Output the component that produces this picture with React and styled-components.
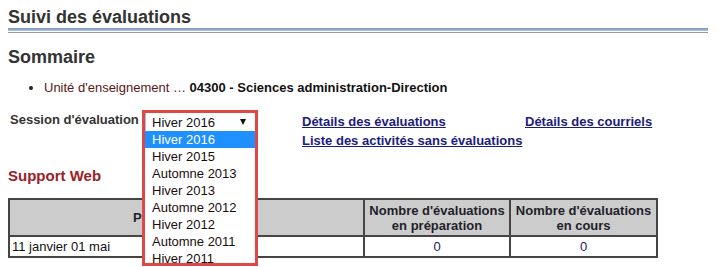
import React from "react";
import styled, { createGlobalStyle } from "styled-components";

const GlobalStyle = createGlobalStyle`
  body {
    margin: 0;
    background: #ffffff;
    font-family: "Liberation Sans", Arial, sans-serif;
    color: #222;
  }
`;

const Page = styled.div`
  min-height: 100vh;
  box-sizing: border-box;
  padding: 6px 8px 0 8px;
`;

const Title = styled.h1`
  margin: 0;
  font-size: 18px;
  line-height: 22px;
  font-weight: bold;
  color: #333;
`;

const Rule = styled.div`
  height: 5px;
  width: 700px;
  background: linear-gradient(
    to bottom,
    #7491b9 0,
    #b3c7df 3px,
    #ffffff 3px,
    #ffffff 4px,
    #9b9b9b 4px,
    #9b9b9b 5px
  );
`;

const SectionTitle = styled.h2`
  margin: 13px 0 0 0;
  font-size: 18px;
  line-height: 22px;
  font-weight: bold;
  color: #333;
`;

const List = styled.ul`
  margin: 12px 0 0 0;
  padding-left: 36px;
  font-size: 13px;
  line-height: 16px;
`;

const Label = styled.span`
  color: #5a1616;
`;

const Strong = styled.b`
  color: #111;
`;

const SessionRow = styled.div`
  display: grid;
  grid-template-columns: 134px 160px 223px auto;
  margin-top: 14px;
  align-items: start;
`;

const SessionLabel = styled.div`
  padding: 2px 0 0 2px;
  font-size: 13px;
  line-height: 16px;
  font-weight: bold;
  color: #333;
`;

const DropWrap = styled.div`
  position: relative;
  width: 116px;
`;

const SelectBox = styled.div`
  display: flex;
  align-items: center;
  justify-content: space-between;
  height: 18px;
  padding: 0 9px 0 7px;
  border: 3px solid #e04747;
  border-bottom: none;
  box-shadow: inset 1px 0 0 #a9bfdc;
  font-size: 13px;
  color: #111;
  background: #fff;
`;

const Arrow = styled.span`
  width: 0;
  height: 0;
  border-left: 3px solid transparent;
  border-right: 3px solid transparent;
  border-top: 6px solid #111;
`;

const Options = styled.div`
  position: absolute;
  top: 100%;
  left: 0;
  width: 116px;
  height: 135px;
  box-sizing: border-box;
  overflow: hidden;
  border: 3px solid #e04747;
  border-top: none;
  background: #fff;
  z-index: 2;
`;

const Option = styled.div`
  height: 17px;
  line-height: 17px;
  padding-left: 7px;
  font-size: 13px;
  color: ${(props) => (props.selected ? "#ffffff" : "#1a0d0d")};
  background: ${(props) => (props.selected ? "#1e90ff" : "transparent")};
`;

const Links = styled.div`
  display: flex;
  flex-direction: column;
  padding-top: 2px;
`;

const Link = styled.a`
  font-size: 13px;
  line-height: 19px;
  font-weight: bold;
  color: #1c1c7c;
  text-decoration: underline;
  cursor: pointer;
`;

const SubTitle = styled.h3`
  margin: 17px 0 0 0;
  font-size: 15px;
  line-height: 18px;
  font-weight: bold;
  color: #9a2226;
`;

const Table = styled.table`
  margin-top: 13px;
  width: 648px;
  table-layout: fixed;
  border-collapse: collapse;
  font-size: 13px;
`;

const Col = styled.col`
  width: ${(props) => props.w};
`;

const Head = styled.th`
  height: 35px;
  padding: 0 2px;
  border: 2px solid #454545;
  background: #cccccc;
  font-weight: bold;
  line-height: 15px;
  color: #1f1f2a;
  white-space: nowrap;
`;

const Cell = styled.td`
  height: 19px;
  padding: 0 2px;
  border: 2px solid #454545;
  line-height: 17px;
  text-align: ${(props) => (props.center ? "center" : "left")};
  color: ${(props) => (props.center ? "#1c1c6c" : "#111")};
`;

const sessions = [
  "Hiver 2016",
  "Hiver 2015",
  "Automne 2013",
  "Hiver 2013",
  "Automne 2012",
  "Hiver 2012",
  "Automne 2011",
  "Hiver 2011",
];

export default function App() {
  return (
    <Page>
      <GlobalStyle />
      <Title>Suivi des évaluations</Title>
      <Rule />
      <SectionTitle>Sommaire</SectionTitle>
      <List>
        <li>
          <Label>Unité d'enseignement …</Label>{" "}
          <Strong>04300 - Sciences administration-Direction</Strong>
        </li>
      </List>
      <SessionRow>
        <SessionLabel>Session d'évaluation</SessionLabel>
        <div>
          <DropWrap>
            <SelectBox>
              <span>Hiver 2016</span>
              <Arrow />
            </SelectBox>
            <Options>
              {sessions.map((s, i) => (
                <Option key={s} selected={i === 0}>
                  {s}
                </Option>
              ))}
            </Options>
          </DropWrap>
        </div>
        <Links>
          <Link>Détails des évaluations</Link>
          <Link>Liste des activités sans évaluations</Link>
        </Links>
        <Links>
          <Link>Détails des courriels</Link>
        </Links>
      </SessionRow>
      <SubTitle>Support Web</SubTitle>
      <Table>
        <colgroup>
          <Col w="355px" />
          <Col w="146px" />
          <Col w="147px" />
        </colgroup>
        <thead>
          <tr>
            <Head>Période d'activité</Head>
            <Head>
              Nombre d'évaluations
              <br />
              en préparation
            </Head>
            <Head>
              Nombre d'évaluations
              <br />
              en cours
            </Head>
          </tr>
        </thead>
        <tbody>
          <tr>
            <Cell>11 janvier 01 mai</Cell>
            <Cell center>0</Cell>
            <Cell center>0</Cell>
          </tr>
        </tbody>
      </Table>
    </Page>
  );
}
